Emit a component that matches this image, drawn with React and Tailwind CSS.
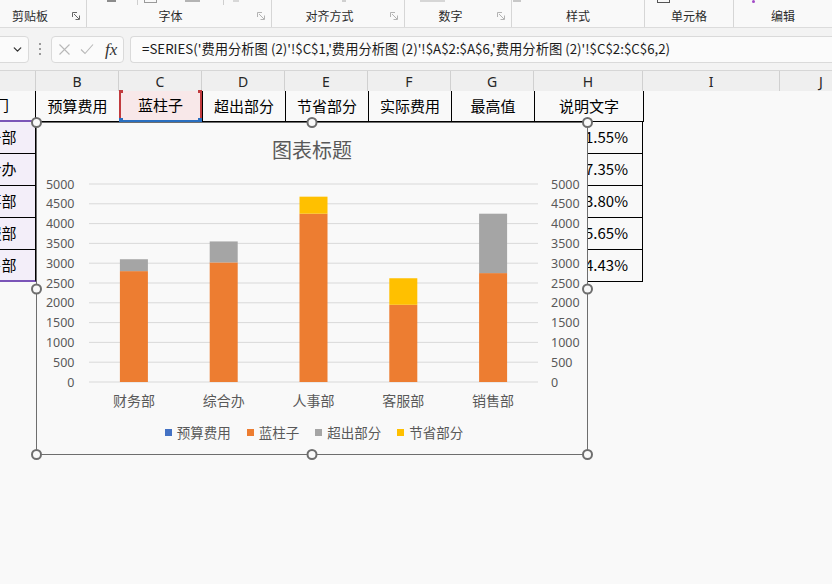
import React from 'react';
import { ChevronDown } from 'lucide-react';

const CJK = "font-['Noto_Sans_CJK_SC','Noto_Sans',sans-serif]";

const COLS = [
  { k: 'A', w: 'w-[83px]' },
  { k: 'B', w: 'w-[83px]' },
  { k: 'C', w: 'w-[83px]' },
  { k: 'D', w: 'w-[83px]' },
  { k: 'E', w: 'w-[83px]' },
  { k: 'F', w: 'w-[83px]' },
  { k: 'G', w: 'w-[83px]' },
  { k: 'H', w: 'w-[109px]' },
  { k: 'I', w: 'w-[137px]' },
  { k: 'J', w: 'w-[83px]' },
];

const HEAD = ['部门', '预算费用', '蓝柱子', '超出部分', '节省部分', '实际费用', '最高值', '说明文字'];

const DATA = [
  { name: '财务部', blue: 2800, over: 300, save: 0, pct: '11.55%' },
  { name: '综合办', blue: 3020, over: 530, save: 0, pct: '17.35%' },
  { name: '人事部', blue: 4250, over: 0, save: 430, pct: '13.80%' },
  { name: '客服部', blue: 1950, over: 0, save: 670, pct: '15.65%' },
  { name: '销售部', blue: 2750, over: 1500, save: 0, pct: '14.43%' },
];

const GROUPS = [
  { label: '剪贴板', w: 'w-[87px]', cls: 'justify-start pl-[12px]', launcher: 'dark' },
  { label: '字体', w: 'w-[185px]', cls: 'justify-center pr-[17px]', launcher: 'light' },
  { label: '对齐方式', w: 'w-[133px]', cls: 'justify-center pr-[17px]', launcher: 'light' },
  { label: '数字', w: 'w-[107px]', cls: 'justify-center pr-[15px]', launcher: 'light' },
  { label: '样式', w: 'w-[133px]', cls: 'justify-center' },
  { label: '单元格', w: 'w-[89px]', cls: 'justify-center' },
  { label: '编辑', w: 'w-[98px]', cls: 'justify-center', last: true },
];

const Launcher = ({ dark }) => (
  <svg width="8" height="8" viewBox="0 0 8 8" className="absolute right-[6px] bottom-[7px]">
    <g fill="none" stroke={dark ? '#666' : '#b3b3b3'} strokeWidth="1">
      <path d="M0.5 5 V0.5 H5" />
      <path d="M2 2 L7 7 M7.5 3.5 V7.5 H3.5" />
    </g>
  </svg>
);

const Ribbon = () => (
  <div className="relative h-[28px] flex border-b border-[#dcdcdc] bg-[#f9f9f9]">
    {/* cut-off icons of the ribbon row above */}
    <div className="absolute left-[107px] top-0 w-[9px] h-[2px] bg-[#8c8c8c]" />
    <div className="absolute left-[137px] top-0 w-px h-[5px] bg-[#cfcfcf]" />
    <div className="absolute left-[144px] top-0 w-[13px] h-[3px] border-x border-b border-[#9a9a9a]" />
    <div className="absolute left-[185px] top-0 w-[15px] h-[2px] bg-[#b4b4b4]" />
    <div className="absolute left-[223px] top-0 w-px h-[5px] bg-[#cfcfcf]" />
    <div className="absolute left-[233px] top-0 w-[6px] h-[2px] bg-[#d8d8d8]" />
    <div className="absolute left-[342px] top-0 w-[4px] h-[2px] bg-[#d0d0d0]" />
    <div className="absolute left-[420px] top-0 w-[25px] h-[2px] bg-[#d6d6d6]" />
    <div className="absolute left-[513px] top-0 w-[8px] h-[2px] bg-[#c8c8c8]" />
    <div className="absolute left-[657px] top-0 w-[13px] h-[3px] border-x border-b border-[#555]" />
    <div className="absolute left-[752px] top-0 w-[3px] h-[3px] rounded-full bg-[#a24bc6]" />
    {GROUPS.map((g) => (
      <div
        key={g.label}
        className={`relative ${g.w} shrink-0 h-full flex items-end pb-[4px] ${g.cls} ${g.last ? '' : 'border-r border-[#d6d6d6]'} mb-[6px]`}
      >
        <span className={`${CJK} text-[12px] leading-[14px] text-[#2b2b2b]`}>{g.label}</span>
        {g.launcher && <Launcher dark={g.launcher === 'dark'} />}
      </div>
    ))}
  </div>
);

const FormulaBar = () => (
  <div className="h-[42px] flex items-center bg-[#f3f3f3]">
    <div className="-ml-[11px] w-[40px] h-[27px] shrink-0 rounded-[4px] border border-[#dadada] bg-[#fbfbfb] flex items-center justify-end pr-[4px]">
      <ChevronDown size={13} strokeWidth={2.4} className="text-[#333]" />
    </div>
    <div className="w-[22px] shrink-0 flex flex-col items-center gap-[3px]">
      <span className="w-[2px] h-[2px] bg-[#9a9a9a]" />
      <span className="w-[2px] h-[2px] bg-[#9a9a9a]" />
      <span className="w-[2px] h-[2px] bg-[#9a9a9a]" />
    </div>
    <div className="w-[73px] h-[27px] shrink-0 rounded-[4px] border border-[#dadada] bg-[#fbfbfb] flex items-center pl-[6px] gap-[9px]">
      <svg width="13" height="13" viewBox="0 0 13 13">
        <path d="M1.5 1.5 L11.5 11.5 M11.5 1.5 L1.5 11.5" stroke="#b8b8b8" strokeWidth="1.1" fill="none" />
      </svg>
      <svg width="14" height="12" viewBox="0 0 14 12">
        <path d="M1 6.5 L5 10.5 L13 1.5" stroke="#b8b8b8" strokeWidth="1.1" fill="none" />
      </svg>
      <span className="font-['Liberation_Serif',serif] italic text-[17px] leading-none text-[#333] ml-[2px]">fx</span>
    </div>
    <div className="ml-[6px] flex-1 h-[27px] rounded-l-[4px] border border-r-0 border-[#dadada] bg-[#fbfbfb] flex items-center pl-[11px]">
      <span className={`${CJK} text-[13.3px] text-[#1a1a1a] whitespace-nowrap`}>
        =SERIES('费用分析图 (2)'!$C$1,'费用分析图 (2)'!$A$2:$A$6,'费用分析图 (2)'!$C$2:$C$6,2)
      </span>
    </div>
  </div>
);

const ColumnHeader = () => (
  <div className="h-[21px] flex -ml-[47px] bg-[#efefef] border-t border-[#d6d6d6]">
    {COLS.map((c) => (
      <div
        key={c.k}
        className={`${c.w} shrink-0 border-r border-[#d0d0d0] flex items-center justify-center font-['Noto_Sans',sans-serif] text-[14px] text-[#262626]`}
      >
        {c.k}
      </div>
    ))}
  </div>
);

const HeaderRow = () => (
  <div className={`h-[31px] flex -ml-[47px] ${CJK} text-[15px] text-black`}>
    {COLS.map((c, i) => {
      if (i === 0)
        return (
          <div key={c.k} className={`${c.w} shrink-0 border-r border-black border-b-2 border-b-[#7b55b8] flex items-center justify-center`}>
            {HEAD[0]}
          </div>
        );
      if (i === 2)
        return (
          <div key={c.k} className={`relative ${c.w} shrink-0 bg-[#f8e8e9] border-x-2 border-[#c23b3e] border-b-2 border-b-[#2a6fc0] flex items-center justify-center`}>
            {HEAD[2]}
            <span className="absolute -left-[2px] -top-px w-[4px] h-[3px] bg-[#c23b3e]" />
            <span className="absolute -right-[2px] -top-px w-[4px] h-[3px] bg-[#c23b3e]" />
            <span className="absolute -left-[2px] -bottom-[2px] w-[4px] h-[4px] bg-[#2a6fc0]" />
            <span className="absolute -right-[2px] -bottom-[2px] w-[4px] h-[4px] bg-[#2a6fc0]" />
          </div>
        );
      if (i < 8)
        return (
          <div key={c.k} className={`${c.w} shrink-0 ${i === 1 ? '' : 'border-l'} border-r-0 border-black border-b flex items-center justify-center`}>
            {HEAD[i]}
          </div>
        );
      return <div key={c.k} className={`${c.w} shrink-0 ${i === 8 ? 'border-l border-black' : ''}`} />;
    })}
  </div>
);

// cells B..G of the data rows sit under the chart, so they are left blank here
const DataRow = ({ d, last }) => (
  <div className={`h-[32px] flex -ml-[47px] ${CJK} text-[15px] text-black`}>
    <div className={`w-[83px] shrink-0 bg-[#f3eef9] border-r border-black ${last ? 'border-b-2 border-b-[#7b55b8]' : 'border-b'} flex items-center justify-center`}>
      {d.name}
    </div>
    {[0, 1, 2, 3, 4, 5].map((j) => (
      <div key={j} className="w-[83px] shrink-0 border-r border-b border-black" />
    ))}
    <div className="w-[109px] shrink-0 border-r border-b border-black flex items-center justify-end pr-[14px]">
      {d.pct}
    </div>
    <div className="w-[137px] shrink-0" />
    <div className="w-[83px] shrink-0" />
  </div>
);

const Y0 = 217;
const K = 198 / 5000;
const X1 = 52;
const X2 = 501;
const CW = (X2 - X1) / 5;
const TICKS = [0, 500, 1000, 1500, 2000, 2500, 3000, 3500, 4000, 4500, 5000];

const Plot = () => (
  <svg width="549" height="250" className="block shrink-0">
    {TICKS.map((t) => {
      const y = Y0 - t * K;
      return (
        <g key={t}>
          <line x1={X1} x2={X2} y1={y} y2={y} stroke="#d9d9d9" strokeWidth="1" />
          <text x="37.5" y={y + 4.5} textAnchor="end" fontSize="12.5" fill="#595959" fontFamily="'Noto Sans', sans-serif">{t}</text>
          <text x="514" y={y + 4.5} textAnchor="start" fontSize="12.5" fill="#595959" fontFamily="'Noto Sans', sans-serif">{t}</text>
        </g>
      );
    })}
    {DATA.map((d, i) => {
      const cx = X1 + CW * (i + 0.5);
      const x = cx - 14;
      const top1 = Y0 - d.blue * K;
      return (
        <g key={d.name}>
          <rect x={x} y={top1} width="28" height={d.blue * K} fill="#ed7d31" />
          {d.over > 0 && <rect x={x} y={top1 - d.over * K} width="28" height={d.over * K} fill="#a5a5a5" />}
          {d.save > 0 && <rect x={x} y={top1 - d.save * K} width="28" height={d.save * K} fill="#ffc000" />}
          <text x={cx} y="241" textAnchor="middle" fontSize="14" fill="#595959" fontFamily="'Noto Sans CJK SC', sans-serif">{d.name}</text>
        </g>
      );
    })}
  </svg>
);

const LEGEND = [
  { label: '预算费用', c: 'bg-[#4472c4]' },
  { label: '蓝柱子', c: 'bg-[#ed7d31]' },
  { label: '超出部分', c: 'bg-[#a5a5a5]' },
  { label: '节省部分', c: 'bg-[#ffc000]' },
];

const Handle = ({ pos }) => (
  <span className={`absolute ${pos} w-[11px] h-[11px] rounded-full border-2 border-[#6e6e6e] bg-[#f9f9f9]`} />
);

const Chart = () => (
  <div className="absolute left-[36px] top-[122px] w-[552px] h-[333px]">
    <div className="w-full h-full border-[1.5px] border-[#6e6e6e] bg-[#f9f9f9] flex flex-col">
      <div className={`h-[42px] pt-[13px] text-center ${CJK} text-[20px] leading-[28px] text-[#595959]`}>图表标题</div>
      <Plot />
      <div className={`h-[34px] flex items-center justify-center gap-[16px] pl-[4px] ${CJK} text-[13.5px] text-[#595959]`}>
        {LEGEND.map((l) => (
          <div key={l.label} className="flex items-center gap-[5px]">
            <span className={`w-[7px] h-[7px] ${l.c}`} />
            <span>{l.label}</span>
          </div>
        ))}
      </div>
    </div>
    <Handle pos="-left-[5px] -top-[5px]" />
    <Handle pos="left-1/2 -translate-x-1/2 -top-[5px]" />
    <Handle pos="-right-[5px] -top-[5px]" />
    <Handle pos="-left-[5px] top-1/2 -translate-y-1/2" />
    <Handle pos="-right-[5px] top-1/2 -translate-y-1/2" />
    <Handle pos="-left-[5px] -bottom-[5px]" />
    <Handle pos="left-1/2 -translate-x-1/2 -bottom-[5px]" />
    <Handle pos="-right-[5px] -bottom-[5px]" />
  </div>
);

export default function App() {
  return (
    <div className="relative w-[832px] h-[584px] overflow-hidden bg-[#f9f9f9]">
      <Ribbon />
      <FormulaBar />
      <ColumnHeader />
      <HeaderRow />
      {DATA.map((d, i) => (
        <DataRow key={d.name} d={d} last={i === DATA.length - 1} />
      ))}
      <Chart />
    </div>
  );
}
